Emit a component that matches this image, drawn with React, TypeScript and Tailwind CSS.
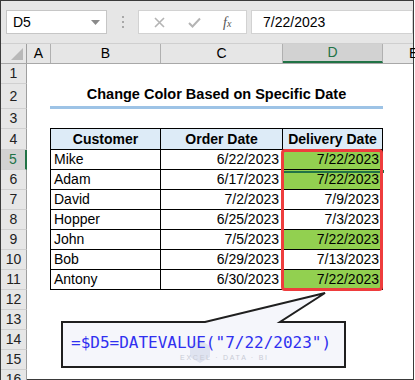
import React from "react";

const rows = [
  { n: 5, name: "Mike", order: "6/22/2023", delivery: "7/22/2023", hit: true },
  { n: 6, name: "Adam", order: "6/17/2023", delivery: "7/22/2023", hit: true },
  { n: 7, name: "David", order: "7/2/2023", delivery: "7/9/2023", hit: false },
  { n: 8, name: "Hopper", order: "6/25/2023", delivery: "7/3/2023", hit: false },
  { n: 9, name: "John", order: "7/5/2023", delivery: "7/22/2023", hit: true },
  { n: 10, name: "Bob", order: "6/29/2023", delivery: "7/13/2023", hit: false },
  { n: 11, name: "Antony", order: "6/30/2023", delivery: "7/22/2023", hit: true },
];

function RowHead({ n, h, active }: { n: number; h: string; active?: boolean }) {
  return (
    <div
      className={`${h} w-[26px] shrink-0 flex items-center justify-center border-b border-[#d0d0d0] text-[14px] ${
        active
          ? "bg-[#d2d2d2] text-[#217346] border-r-2 border-r-[#217346]"
          : "bg-[#e6e6e6] text-[#222] border-r border-r-[#9e9e9e]"
      }`}
    >
      {n}
    </div>
  );
}

export default function App() {
  return (
    <div className="relative w-[415px] h-[380px] overflow-hidden bg-white font-['Liberation_Sans',Arial,sans-serif] text-black">
      <div className="w-[414px] h-[380px] border border-[#3a3a3a] flex flex-col">
        {/* formula bar */}
        <div className="h-[43px] shrink-0 bg-[#e6e6e6] flex items-start pt-[9px] border-b border-[#cfcfcf]">
          <div className="ml-[5px] w-[101px] h-[24px] bg-white border border-[#c6c6c6] flex items-center pl-[6px] pr-[6px] text-[14px]">
            <span className="flex-1">D5</span>
            <svg width="9" height="5" viewBox="0 0 9 5">
              <path d="M0 0 L9 0 L4.5 5 Z" fill="#8a8a8a" />
            </svg>
          </div>
          <div className="ml-[14px] h-[24px] w-[4px] flex flex-col items-center justify-center gap-[3px]">
            <span className="w-[2px] h-[2px] bg-[#a8a8a8]" />
            <span className="w-[2px] h-[2px] bg-[#a8a8a8]" />
            <span className="w-[2px] h-[2px] bg-[#a8a8a8]" />
          </div>
          <div className="ml-[13px] w-[109px] h-[24px] bg-white border border-[#d2d2d2] flex items-center">
            <svg className="ml-[15px]" width="11" height="11" viewBox="0 0 11 11">
              <path d="M1 1 L10 10 M10 1 L1 10" stroke="#b4b4b4" strokeWidth="1.6" />
            </svg>
            <svg className="ml-[23px]" width="13" height="11" viewBox="0 0 13 11">
              <path d="M1 6 L4.5 9.5 L12 1.5" stroke="#b4b4b4" strokeWidth="2" fill="none" />
            </svg>
            <span className="ml-[22px] font-['Liberation_Serif',serif] italic text-[14px] text-[#555]">
              f<span className="text-[10px]">x</span>
            </span>
          </div>
          <div className="ml-[4px] flex-1 h-[24px] bg-white border border-[#d2d2d2] flex items-center pl-[11px] text-[14px]">
            7/22/2023
          </div>
        </div>

        {/* column headers */}
        <div className="h-[20px] shrink-0 flex text-[14px] bg-[#e6e6e6] border-b border-[#a8a8a8]">
          <div className="w-[26px] shrink-0 border-r border-[#9e9e9e] relative">
            <svg className="absolute right-[3px] bottom-[3px]" width="12" height="12" viewBox="0 0 12 12">
              <path d="M12 0 L12 12 L0 12 Z" fill="#b8b8b8" />
            </svg>
          </div>
          <div className="w-[24px] shrink-0 border-r border-[#b0b0b0] flex items-center justify-center">A</div>
          <div className="w-[110px] shrink-0 border-r border-[#b0b0b0] flex items-center justify-center">B</div>
          <div className="w-[122px] shrink-0 border-r border-[#b0b0b0] flex items-center justify-center">C</div>
          <div className="w-[100px] shrink-0 border-r border-[#b0b0b0] bg-[#d2d2d2] text-[#217346] border-b-2 border-b-[#217346] flex items-center justify-center">
            D
          </div>
          <div className="flex-1 flex items-center pl-[26px]">E</div>
        </div>

        {/* sheet body */}
        <div className="flex-1 flex flex-col text-[14px]">
          <div className="flex">
            <RowHead n={1} h="h-[20px]" />
          </div>
          <div className="flex">
            <RowHead n={2} h="h-[25px]" />
            <div className="w-[23px] shrink-0" />
            <div className="w-[333px] h-[25px] shrink-0 border-b-[3px] border-[#9dc3e6] flex items-center justify-center font-bold text-[14.5px]">
              Change Color Based on Specific Date
            </div>
          </div>
          <div className="flex">
            <RowHead n={3} h="h-[20px]" />
            <div className="w-[23px] shrink-0" />
            <div className="w-[333px] h-[20px] shrink-0 border-b border-black" />
          </div>
          <div className="flex">
            <RowHead n={4} h="h-[21px]" />
            <div className="w-[23px] shrink-0" />
            <div className="w-[111px] h-[21px] shrink-0 bg-[#ddebf7] border-l border-r border-b border-black flex items-center justify-center font-bold">
              Customer
            </div>
            <div className="w-[122px] h-[21px] shrink-0 bg-[#ddebf7] border-r border-b border-black flex items-center justify-center font-bold">
              Order Date
            </div>
            <div className="w-[100px] h-[21px] shrink-0 bg-[#ddebf7] border-r border-b border-black flex items-center justify-center font-bold">
              Delivery Date
            </div>
          </div>
          {rows.map((r) => (
            <div key={r.n} className="flex">
              <RowHead n={r.n} h="h-[20px]" active={r.n === 5} />
              <div className="w-[23px] shrink-0" />
              <div className="w-[111px] h-[20px] shrink-0 border-l border-r border-b border-black flex items-center pl-[3px]">
                {r.name}
              </div>
              <div className="w-[122px] h-[20px] shrink-0 border-r border-b border-black flex items-center justify-end pr-[3px]">
                {r.order}
              </div>
              <div
                className={`w-[100px] h-[20px] shrink-0 border-r border-b border-black flex items-center justify-end pr-[3px] ${
                  r.hit ? "bg-[#92d050]" : ""
                }`}
              >
                {r.delivery}
              </div>
            </div>
          ))}
          {[12, 13, 14, 15, 16].map((n) => (
            <div key={n} className="flex">
              <RowHead n={n} h="h-[20px]" />
            </div>
          ))}
        </div>
      </div>

      {/* selection on D5 */}
      <div className="absolute left-[283px] top-[171px] w-[97px] h-[2px] bg-[#217346]" />
      <div className="absolute left-[380px] top-[169px] w-[5px] h-[5px] bg-[#217346] border border-white" />

      {/* red highlight around D5:D11 */}
      <div className="absolute left-[281px] top-[149px] w-[102px] h-[142px] border-[3px] border-[#ee3d3d] rounded-[4px]" />

      {/* callout */}
      <svg className="absolute inset-0 pointer-events-none" width="415" height="380" viewBox="0 0 415 380">
        <path
          d="M62 322 L205 322 L325 293 L280 322 L345 322 L345 367 L62 367 Z"
          fill="#f5f6fb"
          stroke="#1f1f1f"
          strokeWidth="2"
          strokeLinejoin="miter"
        />
        <path d="M190 346 L200 340 L210 346 L210 357 L200 363 L190 357 Z" fill="#dfe3f0" />
      </svg>
      <div className="absolute left-[180px] top-[353px] text-[7px] tracking-[0.25em] text-[#c9ccd6] font-['Liberation_Sans',sans-serif]">
        EXCEL · DATA · BI
      </div>
      <div className="absolute left-[71px] top-[333px] font-['DejaVu_Sans_Mono','Liberation_Mono',monospace] text-[16px] leading-[20px] text-[#3030f0]">
        =$D5=DATEVALUE("7/22/2023")
      </div>
    </div>
  );
}
